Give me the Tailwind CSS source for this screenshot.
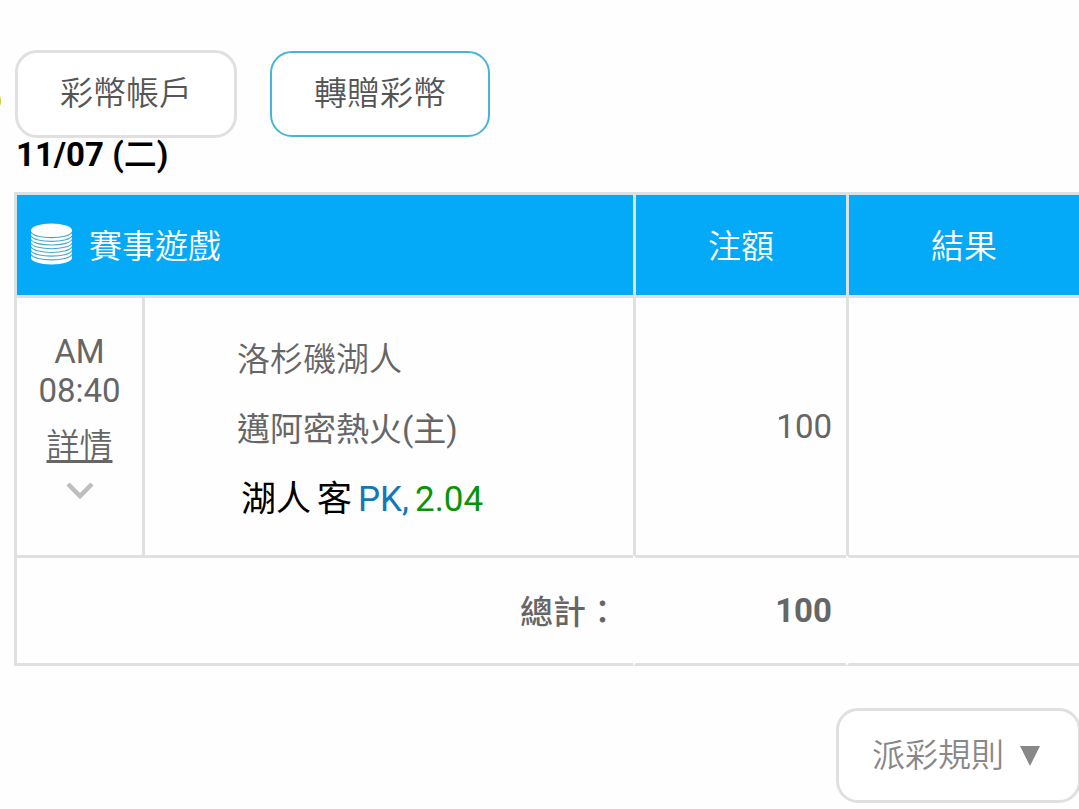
<!DOCTYPE html>
<html lang="zh-Hant">
<head>
<meta charset="utf-8">
<meta name="viewport" content="width=device-width, initial-scale=1">
<title>彩幣帳戶</title>
<script src="https://cdn.jsdelivr.net/npm/@tailwindcss/browser@4"></script>
</head>
<body class="relative overflow-x-hidden bg-[#fefefe] pt-[50px] font-[Roboto,'Noto_Sans_CJK_TC',sans-serif] text-[33px] leading-[40px] text-[#666]">
<span class="absolute -left-[23px] top-[89px] size-6 rounded-full bg-[#d3c32c]"></span>
<nav class="flex items-center gap-[33px] pl-[15px]">
  <button type="button" class="h-[88px] w-[222px] rounded-[22px] border-3 border-[#e0e0e0] bg-white font-[350] text-[#555]">彩幣帳戶</button>
  <button type="button" class="h-[86px] w-[220px] rounded-[22px] border-2 border-[#45b5dc] bg-white font-[350] text-[#555]">轉贈彩幣</button>
</nav>
<main class="pl-[14px]">
  <h1 class="mb-5 pl-0.5 text-[33px] leading-[34px] font-bold text-black">11/07 (<span class="font-medium">二</span>)</h1>
  <table class="w-full table-fixed border-separate border-spacing-0">
    <colgroup>
      <col class="w-[128px]"><col class="w-[491px]"><col class="w-[213px]"><col>
    </colgroup>
    <thead>
      <tr class="h-[103px] text-white">
        <th scope="col" colspan="2" class="border-t-3 border-l-3 border-[#d9e3e6] bg-[#04a9f7] pl-[13px] text-left font-[350]">
          <span class="flex items-center gap-4">
            <svg class="mb-0.5 h-[42px] w-[43px]" viewBox="0 0 43 42" aria-hidden="true">
              <path d="M1 7.500V35C1 38.500 10 41.500 21.500 41.500S42 38.500 42 35V7.500Z" fill="#fff"/>
              <ellipse cx="21.500" cy="7.500" rx="20.500" ry="7" fill="#fff"/>
              <g fill="none" stroke="#45a9cf" stroke-width="1.100">
                <path d="M1 9C4 16.500 39 16.500 42 9"/>
                <path d="M1 12.700C4 20.200 39 20.200 42 12.700"/>
                <path d="M1 16.400C4 23.900 39 23.900 42 16.400"/>
                <path d="M1 20.100C4 27.600 39 27.600 42 20.100"/>
                <path d="M1 23.800C4 31.300 39 31.300 42 23.800"/>
                <path d="M1 27.500C4 35 39 35 42 27.500"/>
                <path d="M1 31.200C4 38.700 39 38.700 42 31.200"/>
              </g>
            </svg>
            <span class="pt-1">賽事遊戲</span>
          </span>
        </th>
        <th scope="col" class="border-t-3 border-l-3 border-[#d9e3e6] bg-[#04a9f7] pt-1 font-[350]">注額</th>
        <th scope="col" class="border-t-3 border-l-3 border-[#d9e3e6] bg-[#04a9f7] pt-1 font-[350]">結果</th>
      </tr>
    </thead>
    <tbody>
      <tr class="h-[260px]">
        <td class="border-t-3 border-l-3 border-[#e0e0e0] pt-[34px] text-center align-top">
          <div class="leading-[39px]">AM<br>08:40</div>
          <a href="#detail" class="mt-3 flex flex-col items-center font-[350]">
            <span class="h-12 leading-[48px] underline decoration-3 underline-offset-3">詳情</span>
            <svg class="mt-3 h-[18px] w-7" viewBox="0 0 28 18" aria-hidden="true"><path d="M2 2L14 14L26 2" fill="none" stroke="#bdbdbd" stroke-width="4.500"/></svg>
          </a>
        </td>
        <td class="border-t-3 border-l-3 border-[#e0e0e0] pt-1.5 pl-[92px] align-middle leading-[70px]">
          <div class="font-[350]">洛杉磯湖人</div>
          <div>邁阿密熱火(主)</div>
          <div class="flex gap-1.5 pl-1 text-[35px] text-black"><span>湖人</span><span>客</span><span class="text-[#1477b8]">PK,</span><span class="text-[#079407]">2.04</span></div>
        </td>
        <td class="border-t-3 border-l-3 border-[#e0e0e0] pr-[14px] text-right">100</td>
        <td class="border-t-3 border-l-3 border-[#e0e0e0]"></td>
      </tr>
    </tbody>
    <tfoot>
      <tr class="h-[111px]">
        <th scope="row" colspan="2" class="border-y-3 border-l-3 border-[#e0e0e0] pt-1 pr-[14px] text-right font-medium">總計：</th>
        <td class="border-y-3 border-l-3 border-[#e0e0e0] border-l-[#fefefe] pr-[14px] text-right font-bold">100</td>
        <td class="border-y-3 border-l-3 border-[#e0e0e0] border-l-[#fefefe]"></td>
      </tr>
    </tfoot>
  </table>
  <div class="mt-[42px] flex justify-end">
    <button type="button" class="-mr-0.5 flex h-[95px] w-[245px] items-center gap-4 rounded-[22px] border-3 border-[#e0e0e0] bg-white pl-[33px] font-[350] text-[#888]">派彩規則
      <svg class="h-5 w-5" viewBox="0 0 20 20" aria-hidden="true"><path d="M0 0H20L10 20Z" fill="#888"/></svg>
    </button>
  </div>
</main>
</body>
</html>
